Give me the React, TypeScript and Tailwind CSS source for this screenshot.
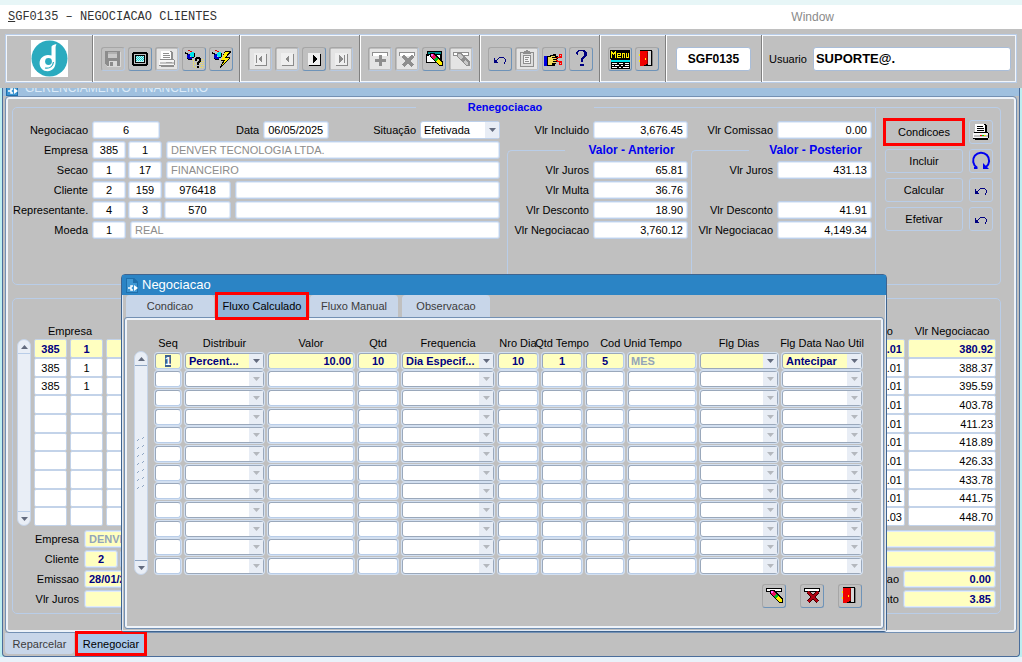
import { useEffect, useRef } from "react";
import type { ReactNode } from "react";
import clsx from "clsx";

const flowColumns = [
  { key: "seq", width: "w-[30px]", kind: "text", value: "1", align: "text-center" },
  { key: "Distribuir", width: "w-[83px]", kind: "select", value: "Percent...", align: "" },
  { key: "Valor", width: "w-[90px]", kind: "text", value: "10.00", align: "text-right" },
  { key: "Qtd", width: "w-[44px]", kind: "text", value: "10", align: "text-center" },
  { key: "Frequencia", width: "w-[96px]", kind: "select", value: "Dia Especif...", align: "" },
  { key: "Nro Dia", width: "w-[44px]", kind: "text", value: "10", align: "text-center" },
  { key: "Qtd Tempo", width: "w-[44px]", kind: "text", value: "1", align: "text-center" },
  { key: "Cod", width: "w-[42px]", kind: "text", value: "5", align: "text-center" },
  { key: "Unid Tempo", width: "w-[72px]", kind: "muted", value: "MES", align: "text-left" },
  { key: "Flg Dias", width: "w-[82px]", kind: "select", value: "", align: "" },
  { key: "Flg Data Nao Util", width: "w-[84px]", kind: "select", value: "Antecipar", align: "" },
];

const flowHeaders = [
  { label: "Seq", span: 1 },
  { label: "Distribuir", span: 1 },
  { label: "Valor", span: 1 },
  { label: "Qtd", span: 1 },
  { label: "Frequencia", span: 1 },
  { label: "Nro Dia", span: 1 },
  { label: "Qtd Tempo", span: 1 },
  { label: "Cod Unid Tempo", span: 2 },
  { label: "Flg Dias", span: 1 },
  { label: "Flg Data Nao Util", span: 1 },
];

const parcelas = [
  { empresa: "385", filial: "1", desconto: "5.01", valor: "380.92" },
  { empresa: "385", filial: "1", desconto: "5.01", valor: "388.37" },
  { empresa: "385", filial: "1", desconto: "5.01", valor: "395.59" },
  { empresa: "", filial: "", desconto: "5.01", valor: "403.78" },
  { empresa: "", filial: "", desconto: "5.01", valor: "411.23" },
  { empresa: "", filial: "", desconto: "5.01", valor: "418.89" },
  { empresa: "", filial: "", desconto: "5.01", valor: "426.33" },
  { empresa: "", filial: "", desconto: "5.01", valor: "433.78" },
  { empresa: "", filial: "", desconto: "5.01", valor: "441.75" },
  { empresa: "", filial: "", desconto: "5.03", valor: "448.70" },
];

/* ---------- icons ---------- */

function Icon({ children, light }: { children: ReactNode; light?: boolean }) {
  return (
    <svg viewBox="0 0 20 20" className="block size-5" shapeRendering="crispEdges" aria-hidden="true">
      {light && <path fill="#e4e4e4" d="M0 0h20v20H0z" />}
      {children}
    </svg>
  );
}

const SaveIcon = () => (
  <Icon>
    <path fill="#8c8c8c" d="M2 2h15v15H4l-2-2z" />
    <path fill="#c9c9c9" d="M5 3h9v6H5z" />
    <path fill="#b0b0b0" d="M5 3h9v2H5z" />
    <path fill="#dadada" d="M6 12h8v5H6z" />
    <path fill="#8c8c8c" d="M7 13h3v4H7z" />
    <path fill="#d8d8d8" d="M17 3h1v15H4v-1h13z" />
  </Icon>
);

const ScreenIcon = () => (
  <Icon>
    <path fill="#000" d="M3 3h14v1h1v12h-1v1H3v-1H2V4h1z" />
    <path fill="#c0c0c0" d="M4 5h12v10H4z" />
    <path fill="#000" d="M5 6h10v8H5z" />
    <path fill="#bff4f4" d="M6 7h8v6H6z" />
    <path fill="#19c8c8" d="M6 7h1v1H6zM8 7h1v1H8zM10 7h1v1h-1zM12 7h1v1h-1zM7 8h1v1H7zM9 8h1v1H9zM11 8h1v1h-1zM13 8h1v1h-1zM6 9h1v1H6zM8 9h1v1H8zM10 9h1v1h-1zM12 9h1v1h-1zM7 10h1v1H7zM9 10h1v1H9zM11 10h1v1h-1zM13 10h1v1h-1zM6 11h1v1H6zM8 11h1v1H8zM10 11h1v1h-1zM12 11h1v1h-1z" />
  </Icon>
);

function PrinterIcon({ disabled }: { disabled?: boolean }) {
  const dark = disabled ? "#8e8e8e" : "#000";
  return (
    <Icon light={disabled}>
      <path fill={dark} d="M5 2h10v1h1v7H5z" />
      <path fill="#fff" d="M4 2h9v1h1v7H4z" />
      <path fill={dark} d="M6 4h6v1H6zM6 6h7v1H6zM6 8h7v1H6zM3 10h14v1H3z" />
      <path fill="#f6f6f6" d="M2 11h15v5H2z" />
      <path fill={disabled ? "#c4c4c4" : "#c0c0c0"} d="M3 13h14v2H3z" />
      <path fill={dark} d="M17 11h1v5h-1zM2 16h15v1H2zM4 17h13v1H4z" />
      <path fill={disabled ? "#a0a0a0" : "#f00"} d="M9 13h2v1H9z" />
      <path fill={disabled ? "#a0a0a0" : "#0c0"} d="M11 13h2v1h-2z" />
      <path fill={disabled ? "#a0a0a0" : "#fd0"} d="M13 13h2v1h-2z" />
    </Icon>
  );
}

const Torch = () => (
  <>
    <path fill="#e00000" d="M4 1h2v1h2v1h2v1H8V3H6V2H4z" />
    <path fill="#000" d="M1 3h1v1h2v1h1v1H3V5H1z" />
    <path fill="#00e5ee" d="M7 3h3v5H7V7H6V4h1z" />
    <path fill="#0000c8" d="M4 5h2v3h2v2H4V9H3V6h1z" />
    <path fill="#000" d="M10 4h1v4h-1zM8 8h2v1H8zM3 9h1v1h4v1H4v-1H3z" />
  </>
);

const QueryHelpIcon = () => (
  <Icon>
    <path fill="#f5e94a" d="M9 11h1v1H9zM11 10h1v1h-1zM16 10h1v1h-1zM18 10h1v1h-1zM9 13h1v1H9zM17 12h1v1h-1zM19 12h1v1h-1zM9 15h1v1H9zM11 14h1v1h-1zM16 14h1v1h-1zM18 14h1v1h-1zM9 17h1v1H9zM11 18h1v1h-1zM17 16h1v1h-1zM19 16h1v1h-1zM16 18h1v1h-1zM18 18h1v1h-1z" />
    <Torch />
    <path fill="#000" d="M11 8h5v1h1v4h-1v1h-1v2h-2v-3h1v-1h1v-2h-2v2h-2V9h1zM13 17h2v2h-2z" />
  </Icon>
);

const QueryRunIcon = () => (
  <Icon>
    <Torch />
    <path fill="#000" d="M14 2h6v1l-4 5h3v1l-9 10H9v-1l3-6h-2v-1z" />
    <path fill="#ffee00" d="M14 3h4l-4 6h4l-8 9 4-7h-4z" />
  </Icon>
);

function NavIcon({ kind, active }: { kind: "first" | "prev" | "next" | "last"; active?: boolean }) {
  const ink = active ? "#000" : "#8a8a8a";
  return (
    <Icon light={!active}>
      <path fill={ink} d="M5 16h11V5h1v12H5z" />
      <path fill="#efefef" d="M4 4h12v12H4z" />
      {kind === "first" && <path fill={ink} d="M6 6h1v8H6zM12 6v8l-4-4z" />}
      {kind === "prev" && <path fill={ink} d="M12 6v8l-4-4z" />}
      {kind === "next" && <path fill={ink} d="M9 6v8l4-4z" />}
      {kind === "last" && <path fill={ink} d="M13 6h1v8h-1zM8 6v8l4-4z" />}
    </Icon>
  );
}

const AddIcon = () => (
  <Icon light>
    <path fill="#8e8e8e" d="M2 3h16v4h-1V4H3v3H2z" />
    <path fill="#fff" d="M3 4h14v3H3z" />
    <path fill="#8e8e8e" d="M9 6h3v4h4v3h-4v4H9v-4H5v-3h4z" />
  </Icon>
);

const RemoveIcon = () => (
  <Icon light>
    <path fill="#8e8e8e" d="M2 3h16v4h-1V4H3v3H2z" />
    <path fill="#fff" d="M3 4h14v3H3z" />
    <path stroke="#8e8e8e" strokeWidth="3" d="M6 7l10 10M16 7L6 17" />
  </Icon>
);

/* a stubby marker lying from upper left to lower right */
const Eraser = () => (
  <>
    <path fill="#000" d="M6 4h4l9 9v4h-3L6 8z" />
    <path fill="#f01060" d="M7 5h2l3 3-2 3-3-3z" />
    <path fill="#ff60ff" d="M7 5h2v2H7z" />
    <path fill="#00c020" d="M12 8l2 2-2 3-2-2z" />
    <path fill="#ffee00" d="M14 10l4 4v2h-2l-4-3z" />
  </>
);

const ClearFormIcon = () => (
  <Icon>
    <path fill="#000" d="M3 2h15v12H2V5h1z" />
    <path fill="#008c8c" d="M4 3h13v2H4z" />
    <path fill="#fff" d="M5 6h11v7H3V7h2z" />
    <Eraser />
  </Icon>
);

const ClearRecordIcon = () => (
  <Icon>
    <path fill="#000" d="M2 2h16v4H2z" />
    <path fill="#fff" d="M3 3h14v2H3z" />
    <Eraser />
  </Icon>
);

const ClearDisabledIcon = () => (
  <Icon light>
    <path fill="#8e8e8e" d="M2 3h16v4H2z" />
    <path fill="#fff" d="M3 4h14v2H3z" />
    <path fill="#8e8e8e" d="M6 4h4l9 9v4h-3L6 8z" />
    <path fill="#c8c8c8" d="M7 5h2l3 3-2 3-3-3zM14 11l3 3v2h-1l-4-3z" />
  </Icon>
);

const DeleteRecordIcon = () => (
  <Icon>
    <path fill="#000" d="M2 2h16v4H2z" />
    <path fill="#fff" d="M3 3h14v2H3z" />
    <path stroke="#400000" strokeWidth="4" d="M6 6l10 10M16 6L6 16" />
    <path stroke="#b00010" strokeWidth="2" d="M6 6l10 10M16 6L6 16" />
  </Icon>
);

const UndoIcon = () => (
  <Icon>
    <path
      fill="#000080"
      d="M4 9h1v2h1v1h1v1h1v1H4zM6 11h1v-1h1v1H7v1H6zM8 9h1V8h5v1h1v1h1v3h-1v2h-1v-2h1v-3h-1V9H9v1H8z"
    />
  </Icon>
);

const RedoCircleIcon = () => (
  <svg viewBox="0 0 20 20" className="block size-5" aria-hidden="true">
    <path fill="none" stroke="#0000f0" strokeWidth="2" d="M3 17h3.500M6 16.500A8 8 0 1 1 15 16" />
    <path fill="#0000f0" d="M12 12v6h6z" />
  </svg>
);

const ClipboardIcon = () => (
  <Icon light>
    <path fill="#8e8e8e" d="M3 3h4V2h2V1h2v1h2v1h4v15H3z" />
    <path fill="#dedede" d="M4 4h12v13H4z" />
    <path fill="#8e8e8e" d="M6 6h8v9H6zM6 3h8v2H6z" />
    <path fill="#f4f4f4" d="M7 7h6v7H7z" />
    <path fill="#8e8e8e" d="M8 8h4v1H8zM8 10h3v1H8zM8 12h4v1H8z" />
  </Icon>
);

const HandCutIcon = () => (
  <Icon>
    <path fill="#0000e0" d="M0 7h3v10H0z" />
    <path fill="#000" d="M3 7h3V6h3V5h3v2h2v3h-1v3h-1v2h-1v2H3z" />
    <path fill="#f3dc5a" d="M4 8h3V7h4v1H8v1h5v1H9v1h3v1H9v1h3v1H8v2H4z" />
    <path fill="none" stroke="#f00" d="M12.500 9.500L17 7M12.500 11.500L17 14M15.500 5.500h2v3h-2zM15.500 12.500h2v3h-2z" />
  </Icon>
);

const HelpIcon = () => (
  <Icon>
    <path fill="#000080" d="M7 1h7v1h1v1h1v4h-1v1h-1v1h-1v1h-1v3h-2v-4h1V8h1V7h1V3h-1V2H8v1H7v3H6V5H5V3h1V2h1zM9 15h4v2H9z" />
  </Icon>
);

const MenuIcon = () => (
  <svg viewBox="0 0 20 20" className="block size-5" shapeRendering="crispEdges" aria-hidden="true">
    <path fill="#000" d="M0 1h20v9H0z" />
    <path
      fill="none"
      stroke="#ffee00"
      d="M1.500 9V2M2.500 3v2M3.500 4v2M4.500 3v2M5.500 2v7M10.500 8.500h-3v-4h3v2h-3M12.500 9V4.500h2V9M16.500 4v4.500h2V4"
    />
    <path fill="#00e5ee" d="M1 11h19v2H1z" />
    <path fill="#000" d="M1 10h19v1H1zM1 13h19v7H1z" />
    <path fill="#fff" d="M2 14h5v1H2zM9 14h4v1H9zM15 14h4v1h-4zM2 16h2v1H2zM5 16h4v1H5zM11 16h2v1h-2zM15 16h4v1h-4zM2 18h5v1H2zM9 18h2v1H9zM13 18h6v1h-6z" />
  </svg>
);

const DoorIcon = () => (
  <Icon>
    <path fill="#000" d="M3 1h12v16H3z" />
    <path fill="#d8d8d8" d="M11 2h3v14h-3z" />
    <path fill="#f00000" d="M3 2h8v13H9v1H7v1H3z" />
    <path fill="#8b0000" d="M10 3h1v12h-1z" />
    <path fill="#ffee00" d="M2 5h1v2H2zM8 9h1v2H8zM2 11h1v2H2z" />
    <path fill="#808080" d="M15 2h1v15h-1z" />
  </Icon>
);

const Logo = () => (
  <svg viewBox="0 0 37 37" className="block size-[37px] bg-white" role="img" aria-label="Denver">
    <circle cx="18.500" cy="18.500" r="18" fill="#2babbf" />
    <path
      fill="#fff"
      d="M20.500 6.500c1.500-1.800 3.500-2.200 5-2.200-1 1.500-.9 3-.9 5v13c0 5.500-3.500 9-8 9s-8-3.300-8-8 3.500-8.300 8.400-8.300c1.400 0 2.700.2 3.500.6z"
    />
    <circle cx="17.500" cy="21.500" r="3.400" fill="#2babbf" />
    <path fill="none" stroke="#2babbf" strokeWidth="1.200" d="M14 28c5 1 8-2 8.500-6" />
  </svg>
);

const FormIcon = () => (
  <svg viewBox="0 0 13 15" className="h-[15px] w-[13px] shrink-0" aria-hidden="true">
    <path fill="#1f6fab" d="M0 0h8l4 4v11H0z" />
    <path fill="#3f97d3" d="M1 1h6v4h4v9H1z" />
    <path fill="#1f6fab" d="M8 0v4h4z" />
    <path fill="none" stroke="#fff" strokeWidth="1.500" d="M7 8H5v4h2M2 10h3" />
    <path fill="#fff" d="M8 7l4 3-4 3z" />
  </svg>
);

function Arrow({ up, faded }: { up?: boolean; faded?: boolean }) {
  return (
    <svg viewBox="0 0 7 4" className="h-1 w-[7px]" aria-hidden="true">
      <path fill={faded ? "#b4b8be" : "#636b7e"} d={up ? "M0 4h7L3.500 0z" : "M0 0h7L3.500 4z"} />
    </svg>
  );
}

/* ---------- controls ---------- */

type FieldProps = {
  label: string;
  value?: string;
  className?: string;
};

function Field({ label, value = "", className }: FieldProps) {
  return (
    <input
      aria-label={label}
      defaultValue={value}
      className={clsx(
        "h-[18px] min-w-0 rounded-[3px] border border-[#bdd0ea] px-1 shadow-[inset_0_0_0_1px_#e3ecf8] outline-none",
        className
      )}
    />
  );
}

function Row({ label, children }: { label: string; children: ReactNode }) {
  return (
    <div className="flex h-5 items-center">
      <span className="mr-1 w-[75px] shrink-0 text-right">{label}</span>
      <div className="flex min-w-0 flex-1 items-center gap-0.5">{children}</div>
    </div>
  );
}

function Amount({ label, value }: { label: string; value: string }) {
  return (
    <label className="flex h-5 items-center justify-end gap-1 pr-[3px] whitespace-nowrap">
      {label}
      <Field label={label} value={value} className="w-[95px] bg-white text-right" />
    </label>
  );
}

function Dropdown({ label, value, className, muted }: FieldProps & { muted?: boolean }) {
  return (
    <div className="relative w-full">
      <select
        aria-label={label}
        disabled={muted}
        className={clsx("block w-full appearance-none rounded-[3px] border pr-[15px] pl-[3px] outline-none", className)}
      >
        <option>{value}</option>
      </select>
      <span className="pointer-events-none absolute inset-y-px right-px flex w-[14px] items-center justify-center bg-[#e8edf5]">
        <Arrow faded={muted} />
      </span>
    </div>
  );
}

function ToolButton({ label, muted, children }: { label: string; muted?: boolean; children: ReactNode }) {
  return (
    <button
      type="button"
      aria-label={label}
      className={clsx(
        "flex size-6 shrink-0 items-center justify-center rounded-[3px] border border-t-[#a6a6a6] border-l-[#a6a6a6]",
        muted ? "border-r-[#b5c8e2] border-b-[#b5c8e2]" : "border-r-[#6e93b8] border-b-[#6e93b8]"
      )}
    >
      {children}
    </button>
  );
}

function ToolGroup({ children }: { children: ReactNode }) {
  return (
    <div className="flex items-center gap-[3px] border-l border-[#808080] pr-1.5 pl-2 shadow-[inset_1px_0_0_#fff]">
      {children}
    </div>
  );
}

function ActionButton({ children, marked }: { children: ReactNode; marked?: boolean }) {
  return (
    <button
      type="button"
      className={clsx(
        "h-6 flex-1 border border-[#b9cde8]",
        marked ? "outline-3 -outline-offset-1 outline-[#ff0000]" : "rounded-[3px]"
      )}
    >
      {children}
    </button>
  );
}

function SideIconButton({ label, children }: { label: string; children: ReactNode }) {
  return (
    <button
      type="button"
      aria-label={label}
      className="flex size-6 shrink-0 items-center justify-center rounded-[3px] border border-[#b9cde8]"
    >
      {children}
    </button>
  );
}

function ScrollRail({ grip }: { grip?: boolean }) {
  const line = grip ? "border-[#8fa5c2]" : "border-[#b9cde8]";
  return (
    <div className="flex w-[14px] shrink-0 flex-col justify-between rounded-full border border-[#c6d5ea] bg-[#e9eef6]">
      <button type="button" aria-label="Subir" className={clsx("flex h-[14px] items-center justify-center border-b", line)}>
        <Arrow up />
      </button>
      {grip && (
        <svg viewBox="0 0 8 52" className="mx-auto h-[52px] w-2" aria-hidden="true">
          {[0, 8, 16, 24, 32, 40, 48].map((y) => (
            <path key={y} stroke="#8fa5c2" d={`M0 ${y + 4}l2-2M5 ${y + 2}l2-2`} />
          ))}
        </svg>
      )}
      <button type="button" aria-label="Descer" className={clsx("flex h-[14px] items-center justify-center border-t", line)}>
        <Arrow />
      </button>
    </div>
  );
}

/* ---------- sections ---------- */

function Toolbar() {
  return (
    <header className="bg-[#c0c0c0] p-[5px]">
      <div className="flex h-[49px] border border-[#b9cde8] shadow-[inset_0_0_0_1px_#f2f6fb]">
        <div className="flex w-[86px] shrink-0 items-center justify-center">
          <Logo />
        </div>
        <ToolGroup>
          <ToolButton label="Salvar" muted><SaveIcon /></ToolButton>
          <ToolButton label="Tela"><ScreenIcon /></ToolButton>
          <ToolButton label="Imprimir" muted><PrinterIcon disabled /></ToolButton>
          <ToolButton label="Entrar consulta"><QueryHelpIcon /></ToolButton>
          <ToolButton label="Executar consulta"><QueryRunIcon /></ToolButton>
        </ToolGroup>
        <ToolGroup>
          <ToolButton label="Primeiro" muted><NavIcon kind="first" /></ToolButton>
          <ToolButton label="Anterior" muted><NavIcon kind="prev" /></ToolButton>
          <ToolButton label="Proximo"><NavIcon kind="next" active /></ToolButton>
          <ToolButton label="Ultimo" muted><NavIcon kind="last" /></ToolButton>
        </ToolGroup>
        <ToolGroup>
          <ToolButton label="Inserir" muted><AddIcon /></ToolButton>
          <ToolButton label="Remover" muted><RemoveIcon /></ToolButton>
          <ToolButton label="Limpar tela"><ClearFormIcon /></ToolButton>
          <ToolButton label="Limpar registro" muted><ClearDisabledIcon /></ToolButton>
        </ToolGroup>
        <ToolGroup>
          <ToolButton label="Desfazer"><UndoIcon /></ToolButton>
          <ToolButton label="Lista de valores" muted><ClipboardIcon /></ToolButton>
          <ToolButton label="Recortar"><HandCutIcon /></ToolButton>
          <ToolButton label="Ajuda"><HelpIcon /></ToolButton>
        </ToolGroup>
        <ToolGroup>
          <ToolButton label="Menu"><MenuIcon /></ToolButton>
          <ToolButton label="Sair"><DoorIcon /></ToolButton>
        </ToolGroup>
        <div className="flex w-24 shrink-0 items-center border-l border-[#808080] px-2.5 shadow-[inset_1px_0_0_#fff]">
          <input
            aria-label="Programa"
            defaultValue="SGF0135"
            className="h-6 w-full rounded-[3px] border border-[#a9bdd8] bg-white text-center text-[12px] font-bold outline-none"
          />
        </div>
        <label className="flex flex-1 items-center gap-1.5 border-l border-[#808080] pr-[5px] pl-[7px] shadow-[inset_1px_0_0_#fff]">
          Usuario
          <input
            defaultValue="SUPORTE@."
            className="h-6 min-w-0 flex-1 rounded-[3px] border border-[#a9bdd8] bg-white px-0.5 text-[13px] font-bold outline-none"
          />
        </label>
      </div>
    </header>
  );
}

function Renegociacao() {
  const code = "w-[34px] bg-white text-center";
  return (
    <section className="flex">
      <fieldset className="h-[185px] min-w-0 flex-1 rounded-l-[5px] border border-[#b9cde8]">
        <legend className="mr-[281px] ml-auto w-[178px] text-center leading-[14px] font-bold text-[#0000f0]">
          Renegociacao
        </legend>
        <div className="flex h-[170px] justify-between pt-1.5">
          <div className="mr-[7px] min-w-0 flex-1">
            <div className="flex h-5 items-center">
              <label className="mr-auto flex items-center gap-1">
                <span className="w-[75px] text-right">Negociacao</span>
                <Field label="Negociacao" value="6" className="w-[68px] bg-white text-center" />
              </label>
              <label className="mr-11 flex items-center gap-1">
                Data
                <Field label="Data" value="06/05/2025" className="w-[66px] bg-white" />
              </label>
              <span className="mr-1">Situação</span>
              <div className="w-20">
                <Dropdown label="Situação" value="Efetivada" className="h-[18px] border-[#bdd0ea] bg-white" />
              </div>
            </div>
            <Row label="Empresa">
              <Field label="Empresa" value="385" className={code} />
              <Field label="Filial" value="1" className={code} />
              <Field label="Nome da empresa" value="DENVER TECNOLOGIA LTDA." className="ml-0.5 flex-1 bg-white px-0.5 text-[#8c8c8c]" />
            </Row>
            <Row label="Secao">
              <Field label="Secao" value="1" className={code} />
              <Field label="Subsecao" value="17" className={code} />
              <Field label="Nome da secao" value="FINANCEIRO" className="ml-0.5 flex-1 bg-white px-0.5 text-[#8c8c8c]" />
            </Row>
            <Row label="Cliente">
              <Field label="Cliente" value="2" className={code} />
              <Field label="Filial do cliente" value="159" className={code} />
              <Field label="Codigo do cliente" value="976418" className="w-[67px] bg-white text-center" />
              <Field label="Nome do cliente" className="ml-0.5 flex-1 bg-white" />
            </Row>
            <Row label="Representante.">
              <Field label="Representante" value="4" className={code} />
              <Field label="Filial do representante" value="3" className={code} />
              <Field label="Codigo do representante" value="570" className="w-[67px] bg-white text-center" />
              <Field label="Nome do representante" className="ml-0.5 flex-1 bg-white" />
            </Row>
            <Row label="Moeda">
              <Field label="Moeda" value="1" className={code} />
              <Field label="Nome da moeda" value="REAL" className="ml-0.5 flex-1 bg-white px-0.5 text-[#8c8c8c]" />
            </Row>
          </div>
          <div className="flex w-[368px] shrink-0 flex-col">
            <div className="grid grid-cols-2">
              <Amount label="Vlr Incluido" value="3,676.45" />
              <Amount label="Vlr Comissao" value="0.00" />
            </div>
            <div className="mt-[3px] grid flex-1 grid-cols-2">
              <fieldset className="rounded-tl-[5px] border-t border-l border-[#b9cde8]">
                <legend className="ml-8 w-[133px] text-center text-[12px] leading-[14px] font-bold text-[#0000f0]">
                  Valor - Anterior
                </legend>
                <div className="pt-[3px]">
                  <Amount label="Vlr Juros" value="65.81" />
                  <Amount label="Vlr Multa" value="36.76" />
                  <Amount label="Vlr Desconto" value="18.90" />
                  <Amount label="Vlr Negociacao" value="3,760.12" />
                </div>
              </fieldset>
              <fieldset className="rounded-tl-[5px] border-t border-l border-[#b9cde8]">
                <legend className="ml-8 w-[133px] text-center text-[12px] leading-[14px] font-bold text-[#0000f0]">
                  Valor - Posterior
                </legend>
                <div className="pt-[3px]">
                  <Amount label="Vlr Juros" value="431.13" />
                  <div className="h-5" />
                  <Amount label="Vlr Desconto" value="41.91" />
                  <Amount label="Vlr Negociacao" value="4,149.34" />
                </div>
              </fieldset>
            </div>
          </div>
        </div>
      </fieldset>
      <div className="mt-[7px] flex w-[125px] shrink-0 flex-col gap-[5px] rounded-r-[5px] border border-l-0 border-[#b9cde8] py-3 pr-[7px] pl-[9px]">
        <div className="flex gap-1.5">
          <ActionButton marked>Condicoes</ActionButton>
          <SideIconButton label="Imprimir condicoes"><PrinterIcon /></SideIconButton>
        </div>
        <div className="flex gap-1.5">
          <ActionButton>Incluir</ActionButton>
          <SideIconButton label="Atualizar"><RedoCircleIcon /></SideIconButton>
        </div>
        <div className="flex gap-1.5">
          <ActionButton>Calcular</ActionButton>
          <SideIconButton label="Desfazer calculo"><UndoIcon /></SideIconButton>
        </div>
        <div className="flex gap-1.5">
          <ActionButton>Efetivar</ActionButton>
          <SideIconButton label="Desfazer efetivacao"><UndoIcon /></SideIconButton>
        </div>
      </div>
    </section>
  );
}

function Parcelas() {
  const yellow = "bg-[#ffffc0] font-bold text-[#000080]";
  return (
    <section className="mt-[13px] rounded-[5px] border border-[#b9cde8] px-1 pt-6 pb-1">
      <div className="flex gap-[3px]">
        <div className="mt-4 flex">
          <ScrollRail />
        </div>
        <table className="flex-1 table-fixed border-collapse">
          <thead>
            <tr className="h-4">
              <th colSpan={2} className="w-[72px] p-0 font-normal">Empresa</th>
              <th className="p-0" />
              <th className="w-[90px] p-0 pr-[15px] text-right font-normal">Desconto</th>
              <th className="w-[88px] p-0 text-center font-normal whitespace-nowrap">Vlr Negociacao</th>
            </tr>
          </thead>
          <tbody>
            {parcelas.map((p, i) => {
              const cell = clsx(
                "block w-full rounded-[2px] border border-[#c3d3e9] px-0.5 outline-none",
                i % 3 === 2 ? "h-[18px]" : "h-[19px]",
                i === 0 ? yellow : "bg-white"
              );
              return (
                <tr key={i}>
                  <td className="w-9 p-0 pr-[3px]"><input aria-label="Empresa" defaultValue={p.empresa} className={clsx(cell, "text-center")} /></td>
                  <td className="w-9 p-0 pr-[3px]"><input aria-label="Filial" defaultValue={p.filial} className={clsx(cell, "text-center")} /></td>
                  <td className="p-0 pr-[3px]"><input aria-label="Titulo" className={cell} /></td>
                  <td className="p-0 pr-[3px]"><input aria-label="Desconto" defaultValue={p.desconto} className={clsx(cell, "text-right")} /></td>
                  <td className="p-0"><input aria-label="Vlr Negociacao" defaultValue={p.valor} className={clsx(cell, "text-right")} /></td>
                </tr>
              );
            })}
          </tbody>
        </table>
      </div>
      <div className="mt-[3px]">
        <div className="flex h-5 items-center">
          <span className="mr-[5px] w-[62px] text-right">Empresa</span>
          <Field label="Nome da empresa" value="DENVER" className="flex-1 bg-[#ffffc0] px-0.5 font-bold text-[#93a5b8]" />
        </div>
        <div className="flex h-5 items-center">
          <span className="mr-[5px] w-[62px] text-right">Cliente</span>
          <Field label="Cliente" value="2" className={clsx("mr-0.5 w-[34px] text-center", yellow)} />
          <Field label="Nome do cliente" className="flex-1 bg-[#ffffc0]" />
        </div>
        <div className="flex h-5 items-center">
          <span className="mr-[5px] w-[62px] text-right">Emissao</span>
          <Field label="Emissao" value="28/01/2025" className={clsx("w-[72px]", yellow)} />
          <label className="ml-auto flex items-center gap-1">
            Comissao
            <Field label="Comissao" value="0.00" className={clsx("w-[93px] text-right", yellow)} />
          </label>
        </div>
        <div className="flex h-5 items-center">
          <span className="mr-[5px] w-[62px] text-right">Vlr Juros</span>
          <Field label="Vlr Juros" className={clsx("w-[72px]", yellow)} />
          <label className="ml-auto flex items-center gap-1">
            Desconto
            <Field label="Desconto" value="3.85" className={clsx("w-[93px] text-right", yellow)} />
          </label>
        </div>
      </div>
    </section>
  );
}

function NegociacaoDialog() {
  const seqRef = useRef<HTMLInputElement>(null);

  useEffect(() => {
    seqRef.current?.focus();
    seqRef.current?.select();
  }, []);

  const tab = "h-[22px] w-[88px] text-[#3c3c3c]";

  return (
    <div
      role="dialog"
      aria-label="Negociacao"
      className="absolute top-[274px] left-[121px] w-[766px] rounded-t-[4px] rounded-b-[3px] border border-[#3f648f] bg-[#c0c0c0]"
    >
      <div className="flex h-5 items-center gap-[3px] bg-[#2b84c5] pl-1 text-[13px] text-white">
        <FormIcon />
        Negociacao
      </div>
      <div className="border-x border-b border-[#dfe9f6] px-px pb-px">
        <div className="flex gap-1 pl-0.5">
          <button type="button" className={clsx(tab, "rounded-t-[4px] bg-[#c8d6e9]")}>Condicao</button>
          <button type="button" className={clsx(tab, "relative bg-[#93b5d9] whitespace-nowrap text-black outline-3 outline-[#ff0000]")}>
            Fluxo Calculado
          </button>
          <button type="button" className={clsx(tab, "rounded-t-[4px] bg-[#c8d6e9]")}>Fluxo Manual</button>
          <button type="button" className={clsx(tab, "rounded-t-[4px] bg-[#c8d6e9]")}>Observacao</button>
        </div>
        <div className="rounded-[3px] border border-[#7390b3] px-[9px] pt-[17px] pb-5 shadow-[inset_0_0_0_2px_#eef3f9]">
          <div className="flex gap-[7px]">
            <div className="mt-4 flex">
              <ScrollRail grip />
            </div>
            <table className="w-[711px] table-fixed border-collapse">
              <colgroup>
                {flowColumns.map((c) => (
                  <col key={c.key} className={c.width} />
                ))}
              </colgroup>
              <thead>
                <tr className="h-4">
                  {flowHeaders.map((h) => (
                    <th key={h.label} colSpan={h.span} className="p-0 pr-1 font-normal whitespace-nowrap">
                      <span className="flex justify-center">{h.label}</span>
                    </th>
                  ))}
                </tr>
              </thead>
              <tbody>
                {Array.from({ length: 12 }, (_, i) => (
                  <tr key={i} className={i % 3 === 1 ? "h-[18px]" : "h-[19px]"}>
                    {flowColumns.map((c) => {
                      const fill = i === 0 ? "bg-[#ffffc0] font-bold text-[#000080]" : "bg-white";
                      const edge = "border-[#9aa8bb] shadow-[0_0_0_1px_#d3e0f1]";
                      return (
                        <td key={c.key} className="p-0 pr-1">
                          {c.kind === "select" ? (
                            <Dropdown
                              label={c.key}
                              value={i === 0 ? c.value : ""}
                              muted={i > 0}
                              className={clsx("h-4", fill, edge)}
                            />
                          ) : (
                            <input
                              ref={i === 0 && c.key === "seq" ? seqRef : undefined}
                              aria-label={c.key}
                              defaultValue={i === 0 ? c.value : ""}
                              className={clsx(
                                "block h-4 w-full rounded-[3px] border border-r-[#b9cde8] border-b-[#b9cde8] px-0.5 outline-none selection:bg-[#40628f] selection:text-white",
                                "border-t-[#9aa8bb] border-l-[#9aa8bb] shadow-[0_0_0_1px_#d3e0f1]",
                                fill,
                                c.align,
                                c.kind === "muted" && "text-[#93a5b8]!"
                              )}
                            />
                          )}
                        </td>
                      );
                    })}
                  </tr>
                ))}
              </tbody>
            </table>
          </div>
          <div className="mt-[9px] flex justify-end gap-[14px] pr-3">
            <ToolButton label="Limpar registro"><ClearRecordIcon /></ToolButton>
            <ToolButton label="Excluir registro"><DeleteRecordIcon /></ToolButton>
            <ToolButton label="Fechar"><DoorIcon /></ToolButton>
          </div>
        </div>
      </div>
    </div>
  );
}

export default function App() {
  return (
    <div className="relative flex min-h-screen flex-col overflow-hidden bg-[#e9f2fa] font-['Liberation_Sans',Arial,sans-serif] text-[11px] leading-[14px] text-black">
      <div className="h-[5px] bg-[#e7f6f7]" />
      <div className="flex h-6 items-center bg-white pl-2">
        <h1 className="flex-1 font-['Liberation_Mono','Courier_New',monospace] text-[12px] text-[#333]">
          <span className="underline">S</span>GF0135 – NEGOCIACAO CLIENTES
        </h1>
        <a href="#window" className="mr-[188px] text-[12px] text-[#8a8a8a]">Window</a>
      </div>
      <Toolbar />
      <div className="bg-[#bdeef0] px-0.5">
        <main className="rounded-b-[4px] border-r border-b border-l border-[#4a6d9b] bg-[#c0c0c0]">
          <div className="flex h-2 items-end gap-1.5 overflow-hidden bg-[#9fc0df] pl-[3px] text-[12px] leading-4 text-[#dcebf8]">
            <FormIcon />
            <span>GERENCIAMENTO FINANCEIRO</span>
          </div>
          <div className="px-0.5">
            <div className="rounded-[4px] border border-[#7390b3] pt-[3px] pr-[15px] pb-[18px] pl-1.5 shadow-[inset_0_0_0_2px_#eef3f9]">
              <Renegociacao />
              <Parcelas />
            </div>
            <div className="flex gap-[3px] pb-0.5">
              <button type="button" className="h-[21px] w-[69px] rounded-b-[4px] bg-[#c8d6e9] text-[#3c3c3c]">Reparcelar</button>
              <button type="button" className="h-[21px] w-[68px] bg-[#a9c8e8] outline-3 -outline-offset-1 outline-[#ff0000]">
                Renegociar
              </button>
            </div>
          </div>
        </main>
      </div>
      <NegociacaoDialog />
    </div>
  );
}
